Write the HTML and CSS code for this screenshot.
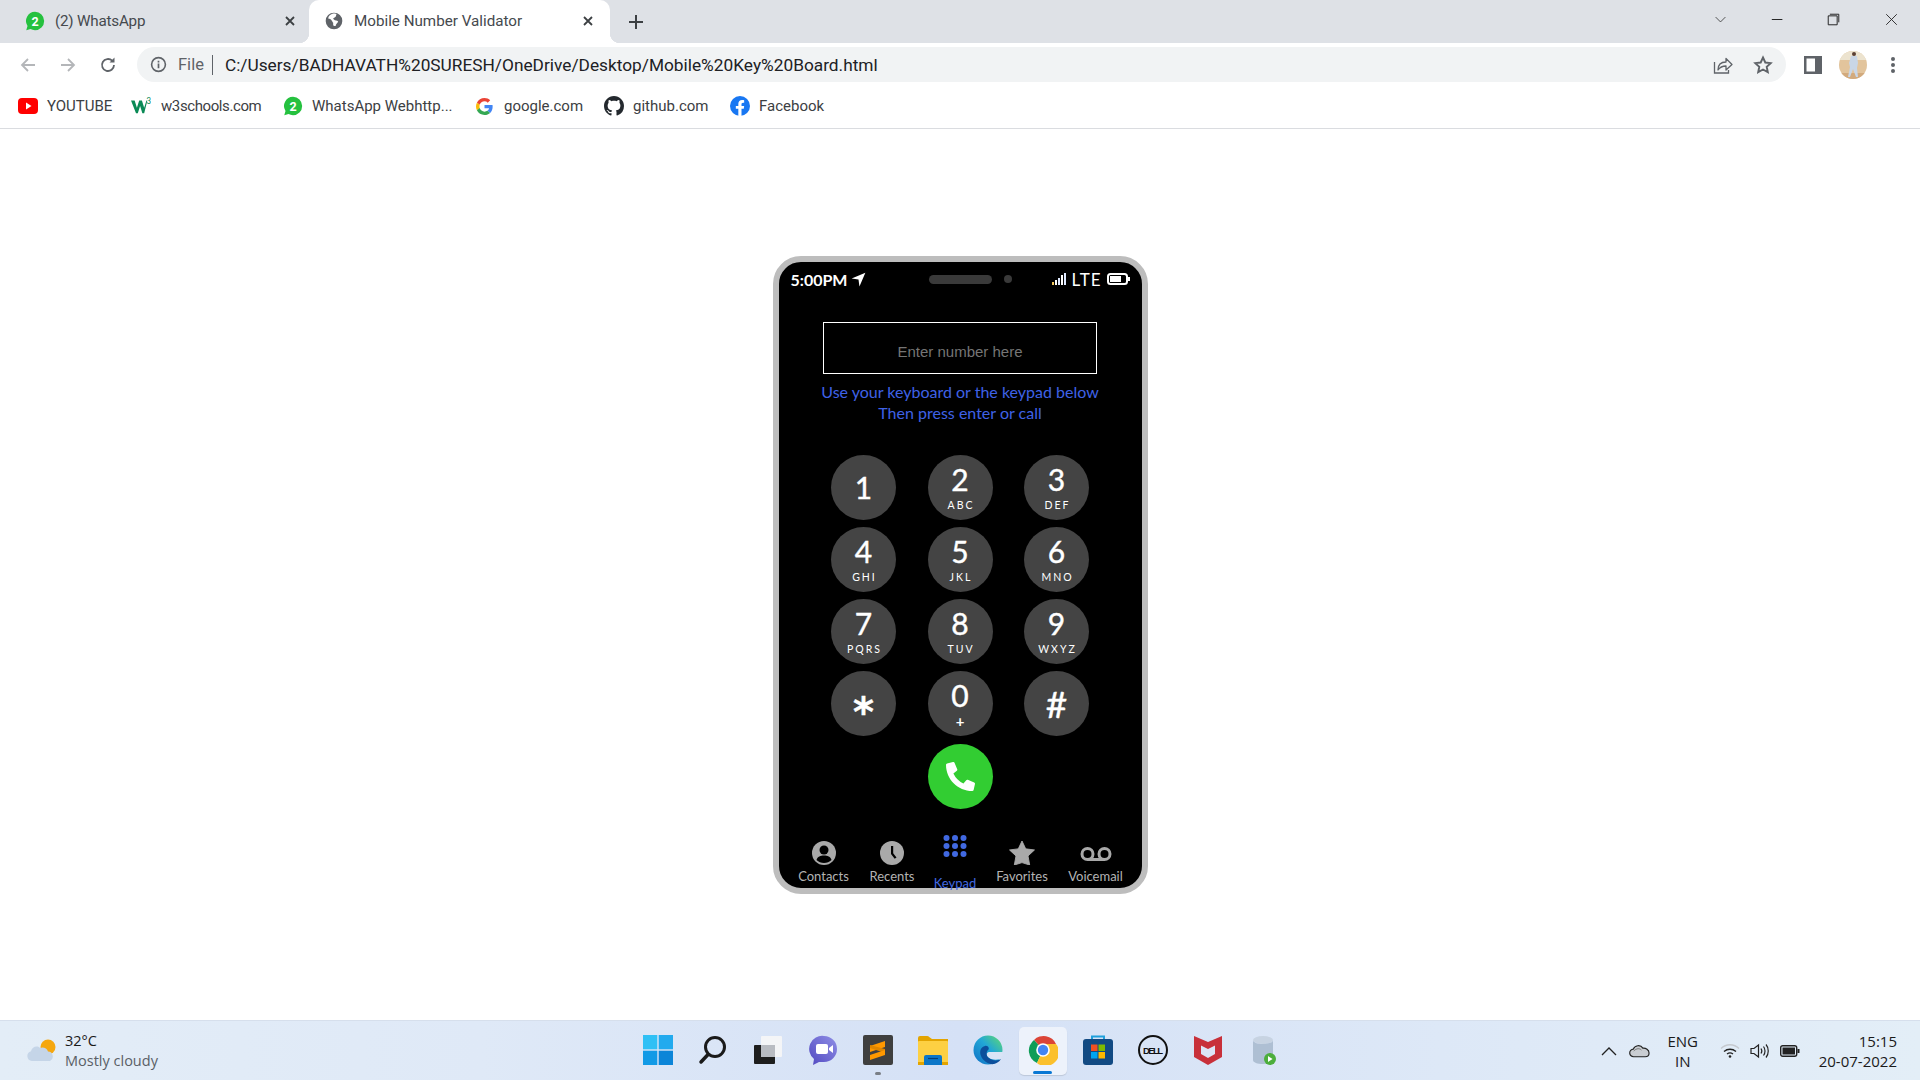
FILE: index.html
```html
<!DOCTYPE html>
<html lang="en">
<head>
    <meta charset="UTF-8">
    <meta name="viewport" content="width=device-width, initial-scale=1.0">
    <title>Mobile Number Validator</title>
    <link rel="stylesheet" href="styles.css">
</head>
<body>
    <svg class="defs" width="0" height="0">
        <symbol id="wa" viewBox="0 0 24 24">
            <path d="M12 1a11 11 0 0 1 0 22c-2 0-3.800-.5-5.400-1.400L1.500 23l1.500-5A11 11 0 0 1 12 1z" fill="#25c13f"/>
            <text x="12" y="17.500" text-anchor="middle" font-size="15" font-weight="700" font-family="Roboto, sans-serif" fill="#fff">2</text>
        </symbol>
    </svg>

    <div class="tabstrip">
        <div class="tab">
            <svg class="fav" viewBox="0 0 24 24"><use href="#wa"/></svg>
            <span class="tab-title tab-title-wa">(2) WhatsApp</span>
            <svg class="tab-x" viewBox="0 0 12 12"><path d="M2 2l8 8M10 2l-8 8" stroke="#3c4043" stroke-width="1.800"/></svg>
        </div>
        <div class="tab tab-active">
            <svg class="fav" viewBox="0 0 24 24">
                <circle cx="12" cy="12" r="10" fill="#5f6368"/>
                <path d="M11 3C8 4 5 6 5 9c2 0 3 1 4 2s1 2 2 3v3c1 1 2 1 3 1 0-2 2-3 3-5 0-1-2-2-4-2-1-1-2-1-2-2l3-2 1-3c-1-1-3-1-4-1z" fill="#fff"/>
            </svg>
            <span class="tab-title">Mobile Number Validator</span>
            <svg class="tab-x" viewBox="0 0 12 12"><path d="M2 2l8 8M10 2l-8 8" stroke="#3c4043" stroke-width="1.800"/></svg>
        </div>
        <svg class="tab-new" viewBox="0 0 16 16"><path d="M8 1v14M1 8h14" stroke="#3c4043" stroke-width="2"/></svg>
        <div class="win-ctrls">
            <svg viewBox="0 0 16 16" class="win-chevron"><path d="M2 5l6 6 6-6" fill="none" stroke="#333" stroke-width="1"/></svg>
            <svg viewBox="0 0 16 16" class="win-min"><path d="M1 8h13" stroke="#222" stroke-width="1.200"/></svg>
            <svg viewBox="0 0 16 16" class="win-max"><path d="M3.500 1.500h11v10M1.500 3.500h11v11h-11z" fill="#dee1e6" stroke="#222" stroke-width="1.200"/></svg>
            <svg viewBox="0 0 16 16" class="win-close"><path d="M1.500 1.500l13 13M14.500 1.500l-13 13" stroke="#222" stroke-width="1.100"/></svg>
        </div>
    </div>

    <div class="toolbar">
        <svg class="nav-btn" viewBox="0 0 18 18"><path d="M16 9H3M9 3L3 9l6 6" fill="none" stroke="#b4b6b9" stroke-width="1.800"/></svg>
        <svg class="nav-btn" viewBox="0 0 18 18"><path d="M2 9h13M9 3l6 6-6 6" fill="none" stroke="#b4b6b9" stroke-width="1.800"/></svg>
        <svg class="nav-btn" viewBox="0 0 18 18"><path d="M15 9a6 6 0 1 1-1.800-4.300" fill="none" stroke="#5f6368" stroke-width="1.800"/><path d="M15.500 1.500v5h-5z" fill="#5f6368"/></svg>
        <div class="omnibox">
            <svg class="info" viewBox="0 0 16 16"><circle cx="8" cy="8" r="6.500" fill="none" stroke="#5f6368" stroke-width="1.500"/><path d="M8 4.500v1.500M8 7v4.500" stroke="#5f6368" stroke-width="1.600"/></svg>
            <span class="file-label">File</span>
            <span class="url-sep"></span>
            <span class="url">C:/Users/BADHAVATH%20SURESH/OneDrive/Desktop/Mobile%20Key%20Board.html</span>
            <svg class="omni-share" viewBox="0 0 20 20"><path d="M1.500 7v11h14v-3" fill="none" stroke="#5f6368" stroke-width="1.300"/><path d="M5 15c0-5 3-8 8-8V3.500l6 6-6 5.500v-4c-3 0-6 1-8 4z" fill="none" stroke="#5f6368" stroke-width="1.300" stroke-linejoin="round"/></svg>
            <svg class="omni-star" viewBox="0 0 20 20"><path d="M10 2.500l2.300 5 5.400.6-4 3.700 1.100 5.400-4.800-2.700-4.800 2.700 1.100-5.400-4-3.700 5.400-.6z" fill="none" stroke="#5f6368" stroke-width="1.900"/></svg>
        </div>
        <svg class="side-panel" viewBox="0 0 18 18"><rect width="18" height="18" fill="#5f6368"/><rect x="2.500" y="2.500" width="8.500" height="13" fill="#fff"/></svg>
        <svg class="avatar" viewBox="0 0 28 28">
            <defs><clipPath id="av"><circle cx="14" cy="14" r="14"/></clipPath></defs>
            <g clip-path="url(#av)">
                <rect width="28" height="28" fill="#e2c49c"/>
                <rect width="28" height="9" fill="#ece3cf"/>
                <rect y="22" width="28" height="6" fill="#d2aa7d"/>
                <circle cx="15" cy="3" r="2" fill="#5b4034"/>
                <path d="M12 5h6l1 7-1 5 1 9h-2l-3-8-3 8h-2l2-10-1-4z" fill="#c9d6e6"/>
            </g>
        </svg>
        <svg class="menu-dots" viewBox="0 0 4 18"><circle cx="2" cy="3" r="2" fill="#5f6368"/><circle cx="2" cy="9" r="2" fill="#5f6368"/><circle cx="2" cy="15" r="2" fill="#5f6368"/></svg>
    </div>

    <div class="bookmarks">
        <div class="bm bm-yt">
            <svg viewBox="0 0 20 20"><rect y="2" width="20" height="16" rx="4" fill="#f00"/><path d="M8 6.500l5.500 3.500L8 13.500z" fill="#fff"/></svg>
            <span>YOUTUBE</span>
        </div>
        <div class="bm bm-w3">
            <svg viewBox="0 0 22 18"><path d="M0 3h4l2.500 8L9 3h3l2.500 8L17 3h1l-3.500 14h-2L10 9l-2.500 8h-2z" fill="#0a8a55"/><text x="17" y="7" font-size="9" font-family="Roboto, sans-serif" fill="#0a8a55">3</text></svg>
            <span>w3schools.com</span>
        </div>
        <div class="bm bm-wa">
            <svg viewBox="0 0 24 24"><use href="#wa"/></svg>
            <span>WhatsApp Webhttp...</span>
        </div>
        <div class="bm bm-g">
            <svg viewBox="0 0 48 48">
                <path fill="#EA4335" d="M24 9.500c3.540 0 6.710 1.220 9.210 3.600l6.850-6.850C35.900 2.380 30.470 0 24 0 14.620 0 6.510 5.380 2.560 13.220l7.980 6.190C12.430 13.720 17.740 9.500 24 9.500z"/>
                <path fill="#4285F4" d="M46.980 24.550c0-1.570-.15-3.090-.38-4.550H24v9.020h12.940c-.58 2.960-2.260 5.480-4.780 7.180l7.730 6c4.510-4.180 7.090-10.360 7.090-17.650z"/>
                <path fill="#FBBC05" d="M10.530 28.590c-.48-1.450-.76-2.990-.76-4.590s.27-3.140.76-4.590l-7.980-6.190C.92 16.460 0 20.120 0 24c0 3.880.92 7.540 2.560 10.780l7.970-6.190z"/>
                <path fill="#34A853" d="M24 48c6.480 0 11.930-2.130 15.890-5.810l-7.730-6c-2.150 1.450-4.920 2.300-8.160 2.300-6.260 0-11.570-4.220-13.470-9.910l-7.980 6.190C6.510 42.620 14.620 48 24 48z"/>
            </svg>
            <span>google.com</span>
        </div>
        <div class="bm bm-gh">
            <svg viewBox="0 0 16 16"><path fill="#24292e" d="M8 0C3.580 0 0 3.580 0 8c0 3.540 2.290 6.530 5.470 7.590.4.070.55-.17.55-.38 0-.19-.01-.82-.01-1.490-2.010.37-2.530-.49-2.690-.94-.09-.23-.48-.94-.82-1.130-.28-.15-.68-.52-.01-.53.63-.01 1.080.58 1.230.82.720 1.210 1.870.87 2.330.66.070-.52.28-.87.51-1.070-1.780-.2-3.640-.89-3.640-3.950 0-.87.31-1.590.82-2.150-.08-.2-.36-1.020.08-2.120 0 0 .67-.21 2.200.82.64-.18 1.320-.27 2-.27.68 0 1.360.09 2 .27 1.530-1.040 2.200-.82 2.200-.82.44 1.100.16 1.920.08 2.120.51.56.82 1.270.82 2.150 0 3.070-1.870 3.750-3.650 3.950.29.25.54.73.54 1.480 0 1.070-.01 1.930-.01 2.200 0 .21.15.46.55.38A8.013 8.013 0 0016 8c0-4.420-3.580-8-8-8z"/></svg>
            <span>github.com</span>
        </div>
        <div class="bm bm-fb">
            <svg viewBox="0 0 24 24"><circle cx="12" cy="12" r="12" fill="#1877f2"/><path d="M16.500 15.400l.5-3.400h-3.200V9.800c0-.9.4-1.800 1.900-1.800H17V5.100s-1.300-.2-2.600-.2c-2.700 0-4.400 1.600-4.400 4.500V12H7v3.400h3V24h3.800v-8.600z" fill="#fff"/></svg>
            <span>Facebook</span>
        </div>
    </div>

    <main class="page">
        <div class="phone">
            <div class="status">
                <span class="status-time">5:00PM</span>
                <svg class="status-arrow" viewBox="0 0 24 24"><path d="M23 1L1 10.500l11 1.500 1.500 11z" fill="#fff"/></svg>
                <span class="speaker"></span>
                <span class="camera"></span>
                <svg class="status-signal" viewBox="0 0 15 12">
                    <rect x="0" y="9" width="2" height="3" fill="#f4c95d"/>
                    <rect x="3" y="7" width="2" height="5" fill="#fff"/>
                    <rect x="6" y="5" width="2" height="7" fill="#dfe9ff"/>
                    <rect x="9" y="2" width="2" height="10" fill="#fff"/>
                    <rect x="12" y="0" width="2" height="12" fill="#dfe9ff"/>
                </svg>
                <span class="status-lte">LTE</span>
                <svg class="status-batt" viewBox="0 0 23 12"><rect x="1" y="1" width="19" height="10" rx="2.500" fill="none" stroke="#fff" stroke-width="2"/><rect x="3" y="3" width="11" height="6" fill="#fff"/><rect x="20.500" y="4" width="2.500" height="4" fill="#fff"/></svg>
            </div>

            <input class="number-input" type="text" placeholder="Enter number here">
            <p class="hint">Use your keyboard or the keypad below<br>Then press enter or call</p>

            <div class="keypad">
                <button class="key"><span class="digit">1</span></button>
                <button class="key"><span class="digit">2</span><span class="letters">ABC</span></button>
                <button class="key"><span class="digit">3</span><span class="letters">DEF</span></button>
                <button class="key"><span class="digit">4</span><span class="letters">GHI</span></button>
                <button class="key"><span class="digit">5</span><span class="letters">JKL</span></button>
                <button class="key"><span class="digit">6</span><span class="letters">MNO</span></button>
                <button class="key"><span class="digit">7</span><span class="letters">PQRS</span></button>
                <button class="key"><span class="digit">8</span><span class="letters">TUV</span></button>
                <button class="key"><span class="digit">9</span><span class="letters">WXYZ</span></button>
                <button class="key"><span class="digit digit-star">*</span></button>
                <button class="key"><span class="digit">0</span><span class="letters plus">+</span></button>
                <button class="key"><span class="digit digit-hash">#</span></button>
            </div>

            <button class="call-btn">
                <svg viewBox="0 0 512 512"><path fill="#fff" d="M497.390 361.800l-112-48a24 24 0 0 0-28 6.900l-49.600 60.600A370.660 370.660 0 0 1 130.600 204.110l60.600-49.600a23.940 23.940 0 0 0 6.900-28l-48-112A24.160 24.160 0 0 0 122.600.610l-104 24A24 24 0 0 0 0 48c0 256.500 207.900 464 464 464a24 24 0 0 0 23.400-18.600l24-104a24.290 24.290 0 0 0-14.010-27.600z"/></svg>
            </button>

            <nav class="phone-nav">
                <div class="nav-item">
                    <svg viewBox="0 0 24 24"><circle cx="12" cy="12" r="12" fill="#a9a9a9"/><circle cx="12" cy="9" r="4.500" fill="#000"/><path d="M4.500 19c1-3.500 4-4.500 7.500-4.500s6.500 1 7.500 4.500c-2 2-4.600 3-7.500 3s-5.500-1-7.500-3z" fill="#000"/></svg>
                    <span>Contacts</span>
                </div>
                <div class="nav-item">
                    <svg viewBox="0 0 24 24"><circle cx="12" cy="12" r="12" fill="#a9a9a9"/><path d="M11 5h2.200v7.200l3.300 4.300-1.800 1.300-3.700-4.900z" fill="#000"/></svg>
                    <span>Recents</span>
                </div>
                <div class="nav-item nav-active">
                    <svg viewBox="0 0 24 22">
                        <circle cx="3.500" cy="3" r="3" fill="#4169e1"/><circle cx="12" cy="3" r="3" fill="#4169e1"/><circle cx="20.500" cy="3" r="3" fill="#4169e1"/>
                        <circle cx="3.500" cy="11" r="3" fill="#4169e1"/><circle cx="12" cy="11" r="3" fill="#4169e1"/><circle cx="20.500" cy="11" r="3" fill="#4169e1"/>
                        <circle cx="3.500" cy="19" r="3" fill="#4169e1"/><circle cx="12" cy="19" r="3" fill="#4169e1"/><circle cx="20.500" cy="19" r="3" fill="#4169e1"/>
                    </svg>
                    <span>Keypad</span>
                </div>
                <div class="nav-item">
                    <svg class="star-icon" viewBox="0 0 28 26"><path d="M14 0l4 8.500 9.500 1.200-7 6.500 1.800 9.800-8.300-2.600-8.300 2.600 1.800-9.800-7-6.500L10 8.500z" fill="#a9a9a9" stroke="#a9a9a9" stroke-linejoin="round"/></svg>
                    <span>Favorites</span>
                </div>
                <div class="nav-item">
                    <svg class="vm-icon" viewBox="0 0 32 14"><circle cx="7.500" cy="7" r="5.500" fill="none" stroke="#a9a9a9" stroke-width="3"/><circle cx="24.500" cy="7" r="5.500" fill="none" stroke="#a9a9a9" stroke-width="3"/><path d="M7.500 12.500h17" stroke="#a9a9a9" stroke-width="3"/></svg>
                    <span>Voicemail</span>
                </div>
            </nav>
        </div>
    </main>

    <footer class="taskbar">
        <div class="weather">
            <svg viewBox="0 0 30 23">
                <circle cx="21" cy="8" r="7.500" fill="#f5a70f"/>
                <path d="M5 22a5 5 0 0 1-1-9.800C5 8 10 6 13 9c3-1.500 7 0 8 3.500a5 5 0 0 1 2 9.500z" fill="#c5d5e8"/>
            </svg>
            <div class="weather-text">
                <span class="temp">32°C</span>
                <span class="sky">Mostly cloudy</span>
            </div>
        </div>

        <div class="task-icons">
            <div class="task-icon">
                <svg viewBox="0 0 30 30">
                    <rect width="14.300" height="14.300" fill="#2fc0f5"/><rect x="15.700" width="14.300" height="14.300" fill="#22aaee"/>
                    <rect y="15.700" width="14.300" height="14.300" fill="#129ae6"/><rect x="15.700" y="15.700" width="14.300" height="14.300" fill="#0c85d8"/>
                </svg>
            </div>
            <div class="task-icon">
                <svg viewBox="0 0 30 30"><circle cx="17" cy="12" r="9.500" fill="none" stroke="#1a1a1a" stroke-width="3"/><path d="M10 19.500L3 27" stroke="#1a1a1a" stroke-width="3.500" stroke-linecap="round"/></svg>
            </div>
            <div class="task-icon">
                <svg viewBox="0 0 30 30"><rect x="8" y="1" width="21" height="21" rx="1" fill="#f4f5f7"/><rect x="1" y="10" width="21" height="19" rx="1" fill="#1e1e1e"/><rect x="8" y="10" width="14" height="12" fill="#b9bcc2"/></svg>
            </div>
            <div class="task-icon">
                <svg viewBox="0 0 30 30">
                    <defs><linearGradient id="chat" x1="1" y1="0" x2="0" y2="1"><stop offset="0" stop-color="#8f8fe6"/><stop offset="1" stop-color="#5148c0"/></linearGradient></defs>
                    <path d="M16 1a13 13 0 0 1 0 26h-5l-6 3 1-6A13 13 0 0 1 16 1z" fill="url(#chat)"/>
                    <rect x="8" y="9" width="12" height="10" rx="2" fill="#fff"/><path d="M21 13l4-3v8l-4-3z" fill="#fff"/>
                </svg>
            </div>
            <div class="task-icon">
                <svg viewBox="0 0 30 30"><rect width="30" height="30" rx="2" fill="#3f3f3f"/><path d="M7 11l15-5v6L7 17z" fill="#ff9800"/><path d="M7 13l15 5v-4L7 10z" fill="#e08600"/><path d="M7 20l15-5v5L7 25z" fill="#ff9800"/></svg>
                <span class="task-dot"></span>
            </div>
            <div class="task-icon">
                <svg viewBox="0 0 30 30"><path d="M0 3a2 2 0 0 1 2-2h7c2 0 3 2 5 3h16v6H0z" fill="#e3a400"/><rect y="6" width="30" height="24" rx="1" fill="#fdd043"/><rect y="27" width="30" height="3" fill="#e3a400"/><path d="M6 22a2 2 0 0 1 2-2h14a2 2 0 0 1 2 2v8H6z" fill="#0b76c8"/><path d="M10 23.500h10" stroke="#043f78" stroke-width="1.200"/></svg>
            </div>
            <div class="task-icon">
                <svg viewBox="0 0 30 30">
                    <defs><linearGradient id="edge" x1="0" y1="1" x2="1" y2="0"><stop offset="0" stop-color="#0f6fc6"/><stop offset=".55" stop-color="#22a7d6"/><stop offset="1" stop-color="#62dc6c"/></linearGradient></defs>
                    <circle cx="15" cy="15" r="14.500" fill="url(#edge)"/>
                    <path d="M30 17H17c-3 0-4 2-3 4s6 5 13 3c2-2 3-4 3-7z" fill="#d9e4f6"/>
                    <path d="M12 11c-4 1-6 5-4 10s8 9 13 8c3-1 5-2 7-5-3 2-9 2-12-1-3-2-3-6-1-8 2-1 0-5-3-4z" fill="#0c4f9c"/>
                </svg>
            </div>
            <div class="task-icon task-open">
                <svg viewBox="0 0 30 30">
                    <path d="M15 15L6 5a13.500 13.500 0 0 1 22 4H15z" fill="#db4437"/>
                    <path d="M15 15L6 5a13.500 13.500 0 0 0 3 23l6-13z" fill="#0f9d58"/>
                    <path d="M15 15l-6 13A13.500 13.500 0 0 0 28 9H15z" fill="#fbc02d"/>
                    <circle cx="15" cy="15" r="6.800" fill="#fff"/><circle cx="15" cy="15" r="5.200" fill="#4285f4"/>
                </svg>
                <span class="task-bar"></span>
            </div>
            <div class="task-icon">
                <svg viewBox="0 0 30 30"><path d="M9 6V1.500h12V6" fill="none" stroke="#1fa0dc" stroke-width="2"/><path d="M0 7a3 3 0 0 1 3-3h24a3 3 0 0 1 3 3v20a3 3 0 0 1-3 3H3a3 3 0 0 1-3-3z" fill="#124a83"/><rect x="8" y="9.500" width="6.500" height="6.500" fill="#f25022"/><rect x="15.500" y="9.500" width="6.500" height="6.500" fill="#7fba00"/><rect x="8" y="17" width="6.500" height="6.500" fill="#00a4ef"/><rect x="15.500" y="17" width="6.500" height="6.500" fill="#ffb900"/></svg>
            </div>
            <div class="task-icon">
                <svg viewBox="0 0 30 30"><circle cx="15" cy="15" r="14" fill="none" stroke="#111" stroke-width="2"/><text x="15" y="18.500" text-anchor="middle" font-size="9.500" font-weight="700" font-family="'Liberation Sans', sans-serif" fill="#111" textLength="20">DELL</text></svg>
            </div>
            <div class="task-icon">
                <svg viewBox="0 0 28 30"><path d="M0 1l14 6 14-6v21L14 30 0 22z" fill="#c8303a"/><path d="M7 10.500l7 3.500 7-3.500V19l-7 4-7-4z" fill="#dce5f6"/></svg>
            </div>
            <div class="task-icon">
                <svg viewBox="-2 0 26 30"><ellipse cx="11" cy="5" rx="10" ry="4" fill="#c7d3e2"/><path d="M1 5v20c0 2.500 4.500 4 10 4s10-1.500 10-4V5c0 2.500-4.500 4-10 4S1 7.500 1 5z" fill="#aebfd3"/><circle cx="18" cy="24" r="6" fill="#4cae3c"/><path d="M16 21l4.500 3-4.500 3z" fill="#fff"/></svg>
            </div>
        </div>

        <div class="tray">
            <svg class="tray-chev" viewBox="0 0 16 10"><path d="M1 9l7-7 7 7" fill="none" stroke="#222" stroke-width="1.300"/></svg>
            <svg class="tray-cloud" viewBox="0 0 22 14"><path d="M5 13a4 4 0 0 1-.5-8C6 1 12 0 14.500 4c3-.5 6.500 2 6.500 5s-2 4-4 4z" fill="#c9cdd2" stroke="#222" stroke-width="1.200"/><path d="M5 7c3-3 6-3 8-1" fill="none" stroke="#777"/></svg>
            <div class="tray-lang"><span>ENG</span><span>IN</span></div>
            <svg class="tray-wifi" viewBox="0 0 20 15"><path d="M1 5.500c5-5 13-5 18 0" fill="none" stroke="#c5c9cf" stroke-width="1.300"/><path d="M4 8.500c3.500-3 8.500-3 12 0M7 11c2-1.500 4-1.500 6 0" fill="none" stroke="#222" stroke-width="1.300"/><circle cx="10" cy="13.500" r="1.300" fill="#222"/></svg>
            <svg class="tray-vol" viewBox="0 0 20 16"><path d="M1 5.500h3L8.500 2v12L4 10.500H1z" fill="none" stroke="#222" stroke-width="1.200"/><path d="M11 5.500c1 1.500 1 3.500 0 5M13.500 3.500c2 2.500 2 6.500 0 9M16 1.500c3 3.500 3 9.500 0 13" fill="none" stroke="#222" stroke-width="1.200"/></svg>
            <svg class="tray-batt" viewBox="0 0 20 12"><rect x=".7" y=".7" width="16" height="10.600" rx="2" fill="none" stroke="#222" stroke-width="1.400"/><rect x="2.500" y="2.500" width="12.500" height="7" fill="#222"/><rect x="17.500" y="4" width="2" height="4" fill="#222"/></svg>
            <div class="tray-clock"><span>15:15</span><span>20-07-2022</span></div>
        </div>
    </footer>
</body>
</html>
```

FILE: styles.css
```css
* {
    box-sizing: border-box;
}
html, body {
    margin: 0;
    padding: 0;
    height: 100%;
}
body {
    width: 1920px;
    height: 1080px;
    overflow: hidden;
    display: flex;
    flex-direction: column;
    background: #fff;
    font-family: Roboto, "Liberation Sans", sans-serif;
    color: #202124;
}
.defs {
    display: none;
}

/* browser tabs */
.tabstrip {
    height: 43px;
    background: #dee1e6;
    display: flex;
    align-items: center;
    flex-shrink: 0;
}
.tab {
    width: 309px;
    height: 43px;
    display: flex;
    align-items: center;
    padding: 0 0 1px 25px;
    position: relative;
}
.tab-active {
    width: 301px;
    background: #fff;
    border-radius: 10px 10px 0 0;
    padding-left: 15px;
}
.tab-active::before,
.tab-active::after {
    content: "";
    position: absolute;
    bottom: 0;
    width: 10px;
    height: 10px;
}
.tab-active::before {
    left: -10px;
    background: radial-gradient(circle at 0 0, transparent 10px, #fff 10.500px);
}
.tab-active::after {
    right: -10px;
    background: radial-gradient(circle at 100% 0, transparent 10px, #fff 10.500px);
}
.fav {
    width: 20px;
    height: 20px;
    flex-shrink: 0;
}
.tab-title {
    margin-left: 10px;
    font-size: 15.200px;
    color: #45494e;
    flex: 1;
}
.tab-title-wa {
    letter-spacing: -0.2px;
}
.tab-x {
    width: 12px;
    height: 12px;
    margin-right: 13px;
}
.tab-active .tab-x {
    margin-right: 16px;
}
.tab-new {
    width: 16px;
    height: 16px;
    margin-left: 18px;
}
.win-ctrls {
    margin-left: auto;
    display: flex;
    align-items: center;
    padding: 0 22px 5px 0;
}
.win-ctrls svg {
    width: 13px;
    height: 13px;
}
.win-chevron {
    margin-right: 44px;
}
.win-min {
    margin-right: 43px;
}
.win-max {
    margin-right: 45px;
}

/* address bar */
.toolbar {
    height: 43px;
    display: flex;
    align-items: center;
    padding-left: 19px;
    flex-shrink: 0;
}
.nav-btn {
    width: 18px;
    height: 18px;
    margin-right: 22px;
}
.toolbar .nav-btn:nth-child(3) {
    margin-right: 20px;
}
.omnibox {
    width: 1649px;
    height: 35px;
    background: #f1f3f4;
    border-radius: 18px;
    display: flex;
    align-items: center;
    padding-left: 13px;
}
.info {
    width: 17px;
    height: 17px;
}
.file-label {
    margin-left: 11px;
    font-size: 16.500px;
    color: #5f6368;
}
.url-sep {
    width: 1px;
    height: 20px;
    background: #5f6368;
    margin: 0 12px 0 8px;
}
.url {
    font-size: 17.300px;
    color: #202124;
    flex: 1;
    white-space: nowrap;
}
.omni-share {
    width: 20px;
    height: 20px;
    margin-right: 20px;
}
.omni-star {
    width: 20px;
    height: 20px;
    margin-right: 13px;
}
.side-panel {
    width: 18px;
    height: 18px;
    margin-left: 18px;
}
.avatar {
    width: 28px;
    height: 28px;
    margin-left: 17px;
}
.menu-dots {
    width: 4px;
    height: 18px;
    margin-left: 24px;
}

/* bookmarks bar */
.bookmarks {
    height: 43px;
    border-bottom: 1px solid #dadce0;
    padding: 0 0 2px 18px;
    display: flex;
    align-items: center;
    flex-shrink: 0;
    font-size: 15px;
    color: #3c4043;
}
.bm {
    display: flex;
    align-items: center;
    white-space: nowrap;
}
.bm svg {
    width: 20px;
    height: 20px;
    flex-shrink: 0;
}
.bm span {
    margin-left: 9px;
}
.bm-yt { width: 113px; }
.bm-w3 { width: 152px; }
.bm-wa { width: 192px; }
.bm-g { width: 129px; }
.bm-gh { width: 126px; }
.bm-w3 span {
    letter-spacing: -0.4px;
    margin-left: 10px;
}
.bm-g svg {
    width: 17px;
    height: 17px;
    margin: 0 2px 0 1px;
}

/* page + phone */
.page {
    flex: 1;
    display: flex;
    justify-content: center;
    padding-top: 127px;
}
.phone {
    width: 375px;
    height: 638px;
    background: #000;
    border: 6px solid #bdbdbd;
    border-radius: 28px;
    display: flex;
    flex-direction: column;
    align-items: center;
    font-family: Lato, "Open Sans", sans-serif;
    color: #fff;
}
.status {
    width: 100%;
    height: 34px;
    flex-shrink: 0;
    display: flex;
    align-items: center;
    padding-left: 12px;
    font-weight: 700;
    font-size: 16px;
}
.status-time {
    width: 58px;
    white-space: nowrap;
}
.status-arrow {
    width: 15px;
    height: 15px;
    margin-left: 2px;
}
.speaker {
    width: 63px;
    height: 9px;
    border-radius: 5px;
    background: #3a3a3a;
    margin-left: 63px;
}
.camera {
    width: 8px;
    height: 8px;
    border-radius: 50%;
    background: #3a3a3a;
    margin-left: 12px;
}
.status-signal {
    width: 15px;
    height: 12px;
    margin-left: 40px;
}
.status-lte {
    margin-left: 5px;
    font-weight: 400;
    font-size: 17px;
    letter-spacing: 1px;
    width: 30px;
}
.status-batt {
    width: 23px;
    height: 12px;
    margin-left: 5px;
}
.number-input {
    width: 274px;
    height: 52px;
    margin-top: 26px;
    flex-shrink: 0;
    background: #000;
    border: 1px solid #fff;
    color: #fff;
    text-align: center;
    font-family: "Liberation Sans", sans-serif;
    font-size: 15px;
    padding: 7px 0 0;
    outline: none;
}
.number-input::placeholder {
    color: #757575;
    opacity: 1;
}
.hint {
    margin: 6.500px 0 0;
    color: #3f62e6;
    font-size: 16px;
    line-height: 21px;
    text-align: center;
    white-space: nowrap;
}
.keypad {
    margin-top: 32px;
    display: grid;
    grid-template-columns: repeat(3, 65px);
    grid-auto-rows: 65px;
    column-gap: 31.500px;
    row-gap: 7.300px;
}
.key {
    width: 65px;
    height: 65px;
    border: none;
    border-radius: 50%;
    background: #444;
    color: #fff;
    padding: 0;
    display: flex;
    flex-direction: column;
    align-items: center;
    justify-content: center;
    font-family: Lato, "Open Sans", sans-serif;
}
.digit {
    font-size: 30px;
    line-height: 30px;
    -webkit-text-stroke: 0.4px #fff;
}
.digit-star {
    font-family: "DejaVu Sans", sans-serif;
    font-weight: 700;
    font-size: 40px;
    line-height: 40px;
    padding-top: 16px;
}
.digit-hash {
    font-size: 37px;
}
.letters {
    font-size: 10.500px;
    line-height: 12px;
    letter-spacing: 2px;
    margin-top: 5px;
    margin-right: -2px;
}
.plus {
    font-size: 15px;
    font-weight: 700;
}
.call-btn {
    width: 65px;
    height: 65px;
    margin-top: 8px;
    flex-shrink: 0;
    border: none;
    border-radius: 50%;
    background: #32cd32;
    padding: 0;
    display: flex;
    align-items: center;
    justify-content: center;
}
.call-btn svg {
    width: 29px;
    height: 29px;
}
.phone-nav {
    display: grid;
    grid-template-columns: 51px 47px 40px 55px 53px;
    column-gap: 19.500px;
    margin-top: 32px;
    align-items: start;
}
.nav-item {
    display: flex;
    flex-direction: column;
    align-items: center;
    color: #b4b4b4;
    font-size: 13px;
    white-space: nowrap;
}
.nav-item svg {
    height: 24px;
    width: 26px;
}
.nav-item span {
    line-height: 16px;
    margin-top: 3px;
}
.nav-item .star-icon {
    width: 28px;
}
.nav-item .vm-icon {
    width: 32px;
    padding-top: 2px;
}
.nav-active {
    margin-top: -6px;
    color: #4169e1;
}
.nav-active svg {
    height: 22px;
}
.nav-active span {
    margin-top: 18px;
}

/* windows taskbar */
.taskbar {
    height: 60px;
    flex-shrink: 0;
    display: grid;
    grid-template-columns: 1fr auto 1fr;
    align-items: center;
    background: linear-gradient(90deg, #e3edf7 0%, #dfe9f7 25%, #d5e1f6 50%, #dde8f7 75%, #e3eef7 100%);
    border-top: 1px solid #d6dfec;
    font-family: "Open Sans", sans-serif;
}
.weather {
    display: flex;
    align-items: center;
    padding-left: 27px;
}
.weather svg {
    width: 30px;
    height: 23px;
}
.weather-text {
    display: flex;
    flex-direction: column;
    margin-left: 8px;
    font-size: 14.500px;
    line-height: 20px;
}
.temp {
    color: #1a1a1a;
}
.sky {
    color: #5a5f66;
}
.task-icons {
    display: flex;
}
.task-icon {
    width: 55px;
    height: 48px;
    padding-bottom: 2px;
    display: flex;
    align-items: center;
    justify-content: center;
    position: relative;
}
.task-icon svg {
    width: 30px;
    height: 30px;
}
.task-open {
    width: 48px;
    margin: 0 3.500px;
    background: #edf2fb;
    border-radius: 5px;
    box-shadow: 0 1px 1px rgba(0, 0, 0, 0.12);
}
.task-dot {
    position: absolute;
    bottom: 0;
    width: 6px;
    height: 3px;
    border-radius: 2px;
    background: #7a7f86;
}
.task-bar {
    position: absolute;
    bottom: 1px;
    width: 19px;
    height: 3px;
    border-radius: 2px;
    background: #0a78d4;
}
.tray {
    display: flex;
    align-items: center;
    justify-content: flex-end;
    padding-right: 23px;
    font-size: 15px;
    color: #1a1a1a;
}
.tray-chev {
    width: 16px;
    height: 10px;
}
.tray-cloud {
    width: 21px;
    height: 14px;
    margin-left: 12px;
}
.tray-lang {
    display: flex;
    flex-direction: column;
    align-items: center;
    line-height: 20px;
    margin-left: 18px;
    width: 30px;
}
.tray-wifi {
    width: 20px;
    height: 15px;
    margin-left: 22px;
}
.tray-vol {
    width: 20px;
    height: 16px;
    margin-left: 10px;
}
.tray-batt {
    width: 20px;
    height: 12px;
    margin-left: 10px;
}
.tray-clock {
    display: flex;
    flex-direction: column;
    align-items: flex-end;
    line-height: 20px;
    margin-left: 19px;
}
```
